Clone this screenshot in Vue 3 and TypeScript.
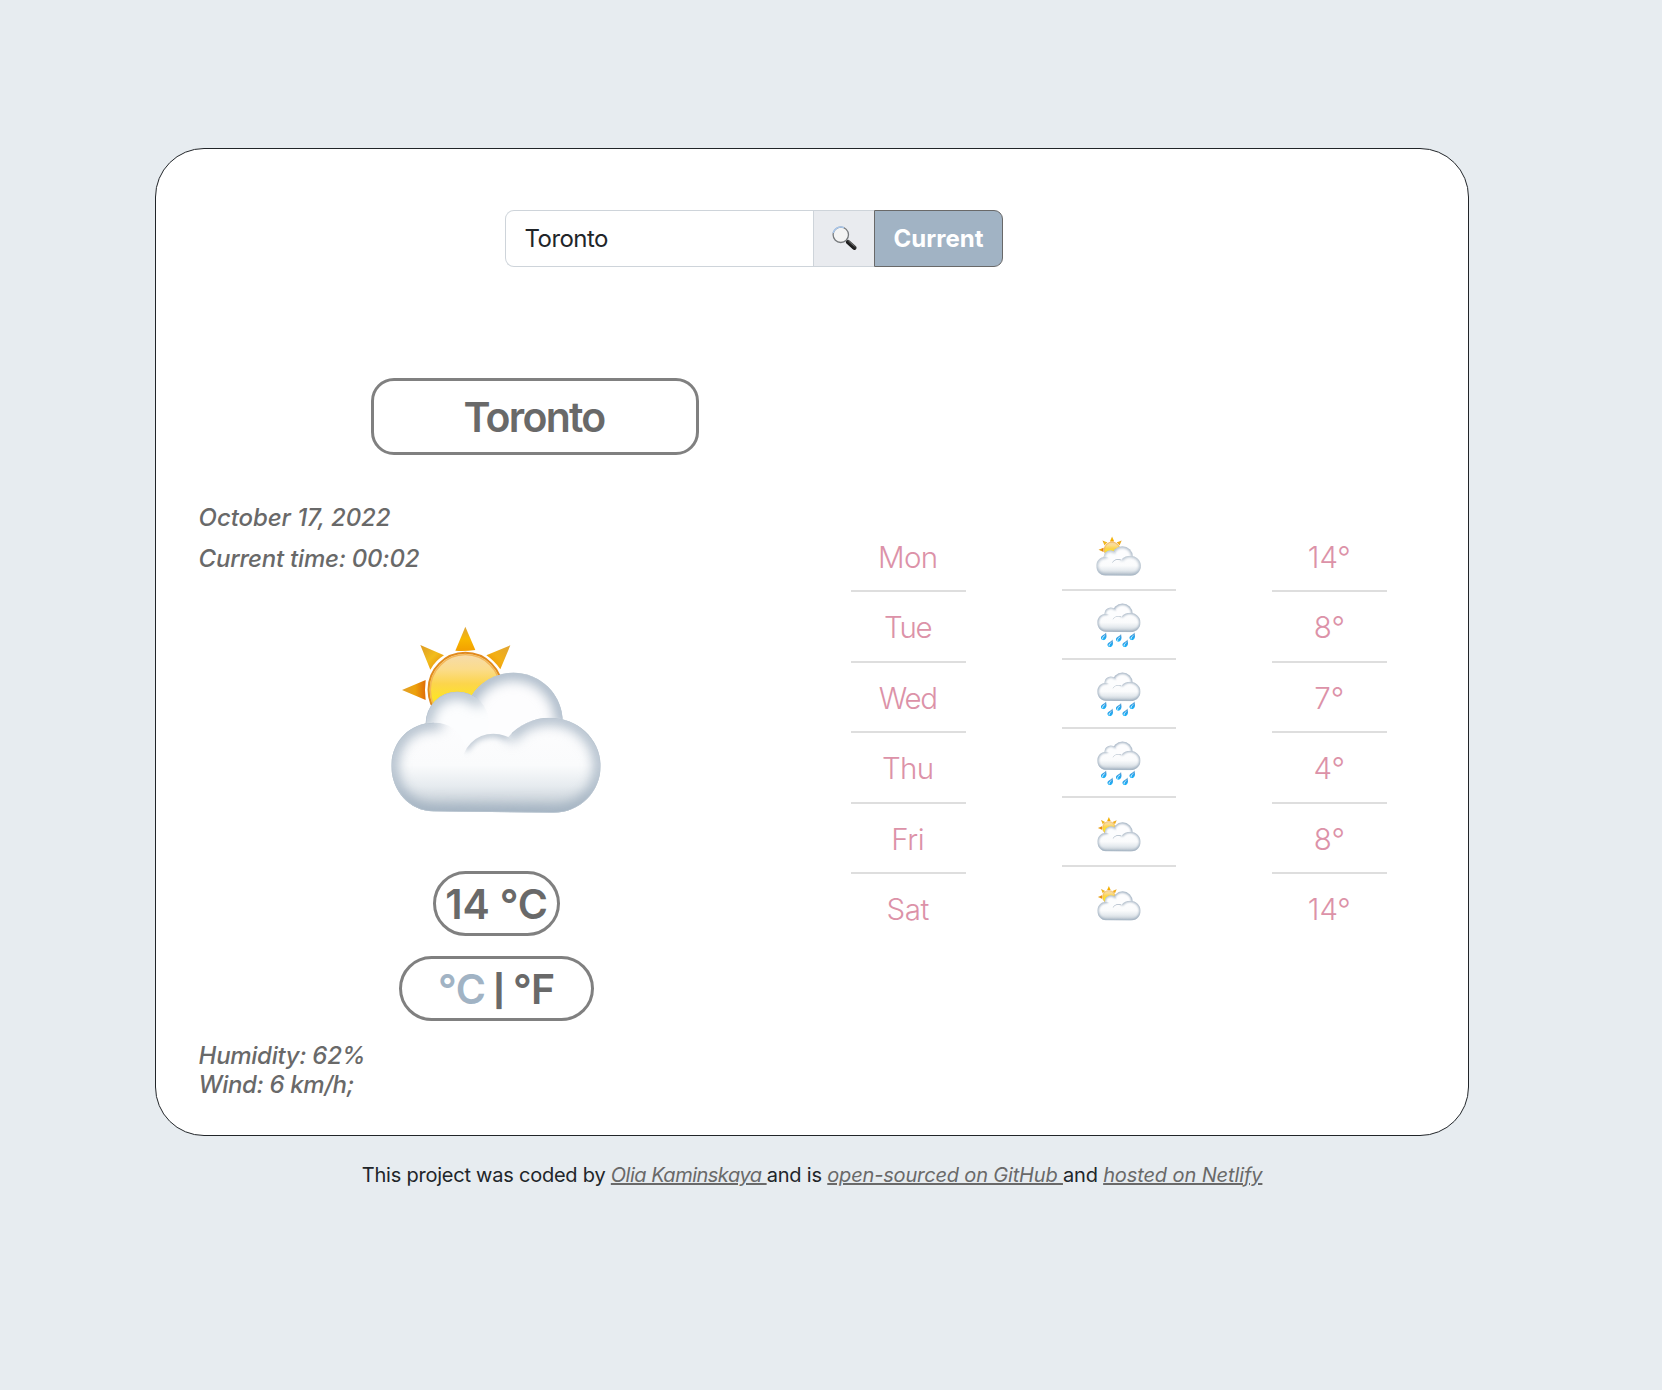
<script setup lang="ts">
import { ref } from 'vue'

interface Day {
  name: string
  icon: 'partly' | 'rain' | 'mostly'
  temp: number
  spacing: number
}

const city = ref('Toronto')
const days: Day[] = [
  { name: 'Mon', icon: 'partly', temp: 14, spacing: -0.6 },
  { name: 'Tue', icon: 'rain', temp: 8, spacing: -1.2 },
  { name: 'Wed', icon: 'rain', temp: 7, spacing: -1.3 },
  { name: 'Thu', icon: 'rain', temp: 4, spacing: -0.6 },
  { name: 'Fri', icon: 'mostly', temp: 8, spacing: -0.4 },
  { name: 'Sat', icon: 'mostly', temp: 14, spacing: -0.3 }
]
</script>

<template>
  <div class="page">
    <svg class="defs" width="0" height="0" aria-hidden="true">
      <defs>
        <filter id="soft" filterUnits="userSpaceOnUse" x="0" y="100" width="750" height="560" color-interpolation-filters="sRGB">
          <feGaussianBlur stdDeviation="19" />
        </filter>
        <filter id="softSmall" filterUnits="userSpaceOnUse" x="0" y="100" width="750" height="560" color-interpolation-filters="sRGB">
          <feGaussianBlur stdDeviation="10" />
        </filter>
        <linearGradient id="sunFill" x1="0" y1="0" x2="0" y2="1">
          <stop offset="0" stop-color="#f5dbae" />
          <stop offset="0.22" stop-color="#fbdc8c" />
          <stop offset="0.42" stop-color="#fcd54c" />
          <stop offset="0.6" stop-color="#fde22a" />
        </linearGradient>
        <linearGradient id="rayUp" x1="0" y1="0" x2="0" y2="1">
          <stop offset="0" stop-color="#dda43c" />
          <stop offset="0.5" stop-color="#f8b800" />
          <stop offset="1" stop-color="#f3a000" />
        </linearGradient>
        <linearGradient id="rayLeft" x1="0" y1="0" x2="1" y2="0">
          <stop offset="0" stop-color="#e0a02c" />
          <stop offset="0.55" stop-color="#eda20c" />
          <stop offset="1" stop-color="#df6c08" />
        </linearGradient>
        <linearGradient id="rayNw" x1="0" y1="0" x2="1" y2="1">
          <stop offset="0" stop-color="#dd9a24" />
          <stop offset="0.5" stop-color="#f2bd1c" />
          <stop offset="1" stop-color="#e58208" />
        </linearGradient>
        <linearGradient id="rayNe" x1="1" y1="0" x2="0" y2="1">
          <stop offset="0" stop-color="#dfa436" />
          <stop offset="0.5" stop-color="#f3b014" />
          <stop offset="1" stop-color="#ec9000" />
        </linearGradient>
        <linearGradient id="baseFill" gradientUnits="userSpaceOnUse" x1="0" y1="323" x2="0" y2="608">
          <stop offset="0" stop-color="#fdfdfe" />
          <stop offset="0.5" stop-color="#fafbfc" />
          <stop offset="0.72" stop-color="#e6ebef" />
          <stop offset="0.88" stop-color="#cdd5dc" />
          <stop offset="1" stop-color="#b8c4cf" />
        </linearGradient>
        <linearGradient id="dropFill" x1="0" y1="0" x2="0" y2="1">
          <stop offset="0" stop-color="#8aa9c6" />
          <stop offset="0.45" stop-color="#2fa0e8" />
          <stop offset="1" stop-color="#14b4fa" />
        </linearGradient>
        <linearGradient id="handle" x1="0" y1="1" x2="1" y2="0">
          <stop offset="0" stop-color="#050505" />
          <stop offset="0.6" stop-color="#2b2b2b" />
          <stop offset="1" stop-color="#8c8c8c" />
        </linearGradient>
        <clipPath id="clipBack"><circle cx="430" cy="336" r="148" /></clipPath>
        <clipPath id="clipLeft"><circle cx="262" cy="340" r="95" /></clipPath>
        <clipPath id="clipMid"><circle cx="370" cy="466" r="95" /></clipPath>
        <clipPath id="clipBase">
          <path d="M64 468C64 396 118 338 192 338C240 338 268 362 285 405C302 385 335 371 370 371C385 371 402 375 415 381C445 345 490 323 540 323C625 323 692 390 692 467C692 545 630 608 550 608L190 604C118 604 64 540 64 468Z" />
        </clipPath>
        <symbol id="sun" viewBox="0 0 750 660" overflow="visible">
          <path d="M286 50L316 120Q286 124 256 122Z" fill="url(#rayUp)" />
          <path d="M421 106L391 178Q373 152 349 136Z" fill="url(#rayNe)" />
          <path d="M151 105L222 136Q196 152 181 179Z" fill="url(#rayNw)" />
          <path d="M96 240L167 210Q163 240 167 270Z" fill="url(#rayLeft)" />
          <circle cx="286" cy="239" r="110.500" fill="url(#sunFill)" stroke="#e08a1e" stroke-width="6" />
          <circle cx="286" cy="239" r="105" fill="none" stroke="#f3b657" stroke-width="4" />
          <path d="M163 345l9-11v12z" fill="#e6ad3c" />
        </symbol>
        <symbol id="cloud" viewBox="0 0 750 660" overflow="visible">
          <g clip-path="url(#clipBack)">
            <circle cx="430" cy="336" r="148" fill="#fdfdfe" />
            <path d="M283 320A148 148 0 0 1 578 350" fill="none" stroke="#9aabbc" stroke-width="38" filter="url(#soft)" />
            <path d="M282 336A148 148 0 0 1 578 336" fill="none" stroke="#b9c5d1" stroke-width="4" />
          </g>
          <g clip-path="url(#clipLeft)">
            <circle cx="262" cy="340" r="95" fill="#fcfdfe" />
            <path d="M168 355A95 95 0 0 1 334 278" fill="none" stroke="#9aabbc" stroke-width="30" filter="url(#soft)" />
            <path d="M167 340A95 95 0 0 1 300 253" fill="none" stroke="#b9c5d1" stroke-width="4" />
          </g>
          <g clip-path="url(#clipBase)">
            <rect x="60" y="320" width="640" height="292" fill="url(#baseFill)" />
            <path d="M215 340C207 338 200 338 192 338C118 338 64 396 64 468C64 540 118 604 190 604L550 608C630 608 692 545 692 467C692 390 625 323 540 323C490 323 445 345 415 384" fill="none" stroke="#9aabbc" stroke-width="32" filter="url(#soft)" />
            <path d="M192 338C118 338 64 396 64 468C64 540 118 604 190 604L550 608C630 608 692 545 692 467C692 390 625 323 540 323C490 323 450 342 425 370" fill="none" stroke="#b9c5d0" stroke-width="4" />
          </g>
          <g clip-path="url(#clipMid)">
            <path d="M285 418C304 387 335 371 370 371C385 371 402 375 412 380" fill="none" stroke="#a9b7c5" stroke-width="16" filter="url(#softSmall)" />
          </g>
        </symbol>
        <symbol id="drop" viewBox="0 0 16 22">
          <path d="M14 1C14.500 7 16 10 14.500 15C13 20 9 21.500 6 21C2 20.500 0 17 1 13C2.500 8 10 7 14 1Z" fill="url(#dropFill)" />
          <path d="M10 10C7 12 4 14 5 18" fill="none" stroke="#d9f4ff" stroke-width="2.400" stroke-linecap="round" />
        </symbol>
      </defs>
    </svg>

    <main class="card">
      <form class="search" @submit.prevent>
        <input v-model="city" class="search-input" type="text" aria-label="City" />
        <button class="search-go" type="submit" aria-label="Search">
          <svg width="26" height="26" viewBox="0 0 26 26">
            <path d="M14.600 14.900l2.400 2.400" stroke="#777" stroke-width="2" />
            <path d="M17.200 17.200l6.100 5.500" stroke="url(#handle)" stroke-width="4.400" stroke-linecap="round" />
            <path d="M17.500 16l6 5.300" stroke="#777" stroke-width=".8" />
            <circle cx="9.800" cy="9.800" r="7.700" fill="#f4f4f4" stroke="#777a7d" stroke-width="1.300" />
            <path d="M2.200 8.200A7.800 7.800 0 0 1 13 2.700" fill="none" stroke="#a9c6ea" stroke-width="1.400" />
          </svg>
        </button>
        <button class="search-current" type="button">Current</button>
      </form>

      <div class="content">
        <section class="today">
          <h1 class="city">Toronto</h1>
          <ul class="when">
            <li class="date">October 17, 2022</li>
            <li class="time">Current time: 00:02</li>
          </ul>
          <svg class="big-icon" width="250" height="220" viewBox="0 0 750 660">
            <use href="#sun" width="750" height="660" />
            <use href="#cloud" width="750" height="660" />
          </svg>
          <div class="temp">14 °C</div>
          <div class="units"><span class="on">°C</span><span class="bar">|</span><span class="off">°F</span></div>
          <ul class="details">
            <li class="humidity">Humidity: 62%</li>
            <li class="wind">Wind: 6 km/h;</li>
          </ul>
        </section>

        <section class="forecast">
          <div class="col">
            <div v-for="d in days" :key="d.name" class="cell" :style="{ letterSpacing: d.spacing + 'px' }">{{ d.name }}</div>
          </div>
          <div class="col icons">
            <div v-for="d in days" :key="d.name" class="cell">
              <svg width="114" height="67" viewBox="0 0 114 67">
                <g v-if="d.icon === 'partly'" transform="translate(29.700 11) scale(.0712 .0703)">
                  <use href="#sun" width="750" height="660" />
                  <use href="#cloud" width="750" height="660" />
                </g>
                <g v-else-if="d.icon === 'rain'">
                  <use href="#cloud" width="750" height="660" transform="translate(30.800 -.2) scale(.0690 .0680)" />
                  <use href="#drop" x="38.500" y="41" width="6.500" height="8.500" />
                  <use href="#drop" x="53.500" y="42.500" width="6.500" height="8.500" />
                  <use href="#drop" x="67" y="41" width="6.500" height="8.500" />
                  <use href="#drop" x="45" y="48" width="6.500" height="8.500" />
                  <use href="#drop" x="60" y="48" width="6.500" height="8.500" />
                </g>
                <g v-else>
                  <use href="#sun" width="750" height="660" transform="translate(30.300 16) scale(.0580 .0580)" />
                  <use href="#cloud" width="750" height="660" transform="translate(30.900 11.300) scale(.0690 .0695)" />
                </g>
              </svg>
            </div>
          </div>
          <div class="col temps">
            <div v-for="d in days" :key="d.name" class="cell">{{ d.temp }}°</div>
          </div>
        </section>
      </div>
    </main>

    <footer class="credits"><span class="c1">This project was coded by </span><a class="c2">Olia Kaminskaya </a><span class="c3">and is </span><a class="c4">open-sourced on GitHub </a><span class="c3">and </span><a class="c5">hosted on Netlify</a></footer>
  </div>
</template>

<style>
body {
  background: #e7ebf0;
}
</style>

<style scoped>
.page {
  box-sizing: border-box;
  width: 1662px;
  height: 1390px;
  padding: 148px 0 0 155px;
  background: #e7ecf0;
  color: #212529;
  font-family: Inter, "Liberation Sans", sans-serif;
}
.defs {
  position: absolute;
}
.card {
  box-sizing: border-box;
  width: 1314px;
  height: 988px;
  padding-top: 61px;
  border: 1px solid #212529;
  border-radius: 49px;
  background: #fff;
}
.search {
  display: flex;
  width: 498px;
  height: 57px;
  margin-left: 349px;
}
.search-input,
.search-go,
.search-current {
  box-sizing: border-box;
  height: 57px;
  margin: 0;
  font-family: inherit;
  font-size: 24px;
}
.search-input {
  width: 308px;
  padding: 0 0 0 18.500px;
  border: 1px solid #ced4da;
  border-right: 0;
  border-radius: 9px 0 0 9px;
  outline: 0;
  background: #fff;
  color: #212529;
  letter-spacing: -0.55px;
}
.search-go {
  display: flex;
  align-items: center;
  justify-content: center;
  width: 61px;
  padding: 0 1px 1px 0;
  border: 1px solid #ced4da;
  border-right: 0;
  background: #e9ebef;
}
.search-current {
  width: 129px;
  padding: 0;
  border: 1px solid #696969;
  border-radius: 0 9px 9px 0;
  background: #a1b3c4;
  color: #fff;
  font-weight: 700;
}
.content {
  display: flex;
}
.today {
  width: 695px;
}
.city {
  box-sizing: border-box;
  width: 328px;
  height: 77px;
  margin: 111px 0 0 215px;
  padding-right: 2px;
  border: 3px solid #808080;
  border-radius: 23px;
  color: #696969;
  font-size: 41px;
  font-weight: 560;
  line-height: 73px;
  letter-spacing: -1.75px;
  text-align: center;
}
ul {
  margin: 0;
  padding: 0 0 0 42.600px;
  list-style: none;
  color: #696969;
  font-size: 24px;
  font-style: italic;
  font-weight: 550;
}
.when {
  margin-top: 42px;
  line-height: 41px;
}
.date {
  letter-spacing: -0.08px;
}
.time {
  letter-spacing: -0.24px;
}
.big-icon {
  display: block;
  margin: 31px 0 0 214px;
}
.temp,
.units {
  box-sizing: border-box;
  height: 65px;
  border: 3px solid #808080;
  border-radius: 33px;
  color: #696969;
  font-size: 41px;
  font-weight: 560;
  line-height: 61px;
  white-space: nowrap;
}
.temp {
  width: 127px;
  margin: 41px 0 0 277px;
  letter-spacing: -0.2px;
  text-align: center;
}
.units {
  display: flex;
  width: 195px;
  margin: 20px 0 0 243px;
  padding-left: 36px;
}
.on {
  width: 55px;
  color: #a1b3c4;
  letter-spacing: -0.4px;
}
.bar {
  width: 20px;
  font-size: 31px;
  font-weight: 800;
  line-height: 63px;
}
.off {
  letter-spacing: -0.8px;
}
.details {
  margin-top: 20px;
  line-height: 29px;
}
.humidity {
  letter-spacing: -0.3px;
}
.wind {
  letter-spacing: -0.38px;
}
.forecast {
  display: flex;
  align-items: flex-start;
  gap: 96px;
  padding-top: 254.400px;
}
.col {
  width: 115px;
}
.cell {
  box-sizing: border-box;
  height: 70.600px;
  padding-right: 1.500px;
  border-bottom: 2px solid #dedede;
  color: #dc92a8;
  font-size: 29.500px;
  font-weight: 340;
  line-height: 70.600px;
  text-align: center;
}
.cell:first-child {
  line-height: 72px;
}
.cell:last-child {
  border-bottom-color: transparent;
}
.temps .cell {
  padding-right: 0.500px;
}
.icons {
  width: 114px;
  padding-top: 0.800px;
}
.icons .cell {
  height: 69px;
  padding: 0;
}
.icons svg {
  display: block;
}
.credits {
  width: 900px;
  margin: 27px 0 0 206.800px;
  font-size: 20px;
  line-height: 24px;
  white-space: pre;
}
.credits a {
  color: #696969;
  font-style: italic;
  text-decoration: underline;
}
.c1 {
  letter-spacing: -0.23px;
}
.c2 {
  letter-spacing: -0.5px;
}
.c3 {
  letter-spacing: -0.19px;
}
.c4 {
  letter-spacing: -0.17px;
}
.c5 {
  letter-spacing: -0.11px;
}
</style>
